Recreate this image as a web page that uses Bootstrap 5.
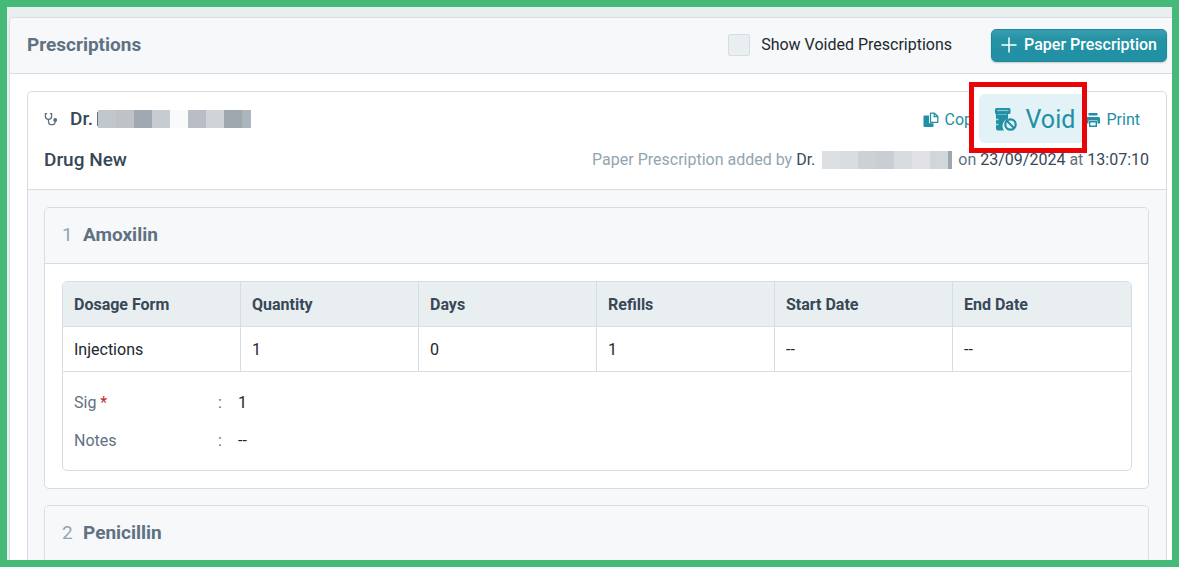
<!DOCTYPE html>
<html lang="en">
<head>
<meta charset="utf-8">
<meta name="viewport" content="width=device-width, initial-scale=1">
<title>Prescriptions</title>
<link href="https://cdn.jsdelivr.net/npm/bootstrap@5.3.0/dist/css/bootstrap.min.css" rel="stylesheet">
<style>
:root { --line: #d6dde5; --soft: #f6f8fa; --head: #e9eef1; --slate: #5f7182; --ink: #374857; --teal: #2190a4; }
body { font-family: Roboto, "Liberation Sans", sans-serif; font-size: 16px; line-height: 24px; color: #22282e; }
.frame { height: 100vh; border: 7px solid #44b978; background: var(--head); padding: 10px 0 0 2px; overflow: hidden; }
.panel { border: 1px solid var(--line); border-radius: 5px; background: #fff; }
.panel-page { border-right: 0; border-radius: 5px 0 0 0; }
.panel-head { background: var(--soft); border-bottom: 1px solid var(--line); border-radius: 4px 4px 0 0; height: 56px; padding: 0 17px 1px; }
.panel-page > .panel-head { padding-right: 5px; }
.panel-page > .panel-body { padding: 17px 5px 17px 17px; }
.panel-title { font-size: 19px; line-height: 24px; font-weight: 700; color: var(--slate); margin: 0; }
.panel-title .num { font-weight: 400; color: #93a5b1; display: inline-block; width: 21px; }
.rx-head { padding: 15px 17px 17px 16px; border-bottom: 1px solid var(--line); }
.rx-top { height: 24px; margin-bottom: 17px; }
.rx-body { padding: 17px 17px 17px 16px; background: var(--soft); display: grid; gap: 16px; border-radius: 0 0 5px 5px; }
.rx-title { font-size: 19px; line-height: 24px; font-weight: 500; color: var(--ink); margin: 0; }
.toggle { gap: 11px; margin-right: 39px; }
.form-check-input.voided { width: 22px; height: 22px; margin: 0; border: 1px solid var(--line); border-radius: 2px; background-color: var(--head); }
.btn-teal { background: linear-gradient(#3a9fb0, #2592a5 30%, #2190a4); border: 1px solid #1c8a9d; border-radius: 5px; color: #fff; font-weight: 500; height: 33px; padding: 0 9px 0 8px; gap: 6px; box-shadow: 0 1px 2px #0003; }
.btn-teal:hover { background: #1c8294; color: #fff; }
.actions { margin-right: 9px; padding-top: 2px; }
.act { color: var(--teal); text-decoration: none; gap: 6px; }
.slot { width: 104px; }
.callout { position: absolute; left: -12px; top: -26px; width: 118px; height: 71px; border: 5px solid #e90407; background: #fff; padding: 7px 0 5px 5px; z-index: 2; }
.btn-void { background: #e3f2f6; color: var(--teal); border: 0; border-radius: 6px 0 0 6px; height: 49px; font-size: 25px; padding: 2px 0 0 15px; }
.redact { height: 18px; display: flex; }
.redact i { flex: 0 0 18px; }
.redact .edge { flex-basis: 1px; height: 14px; margin-top: 2px; }
.meta { color: var(--slate); }
.meta .redact { margin: 0 2px 0 3px; }
.meta .by { color: #93a5b1; }
.meta b { font-weight: 400; color: var(--ink); }
.dose { padding: 17px 16px 17px 17px; }
.dose-box { border: 1px solid var(--line); border-radius: 5px; overflow: hidden; }
.dose-table { width: 100%; table-layout: fixed; border-collapse: separate; border-spacing: 0; }
.dose-table th, .dose-table td { height: 45px; padding: 1px 11px 0; border-bottom: 1px solid var(--line); border-right: 1px solid var(--line); }
.dose-table th:last-child, .dose-table td:last-child { border-right: 0; }
.dose-table th { background: var(--head); color: var(--ink); font-weight: 700; }
.notes { padding: 19px 11px 17px; margin: 0; display: grid; grid-template-columns: 144px 20px 1fr; row-gap: 14px; }
.notes dt, .notes dd { margin: 0; font-weight: 400; }
.notes dt, .notes .colon { color: var(--slate); }
.notes .star { color: #c22b2b; }
</style>
</head>
<body>
<main class="frame">
  <section class="panel panel-page">
    <header class="panel-head d-flex align-items-center">
      <h1 class="panel-title me-auto">Prescriptions</h1>
      <div class="toggle d-flex align-items-center">
        <input class="form-check-input voided" type="checkbox" id="voided">
        <label for="voided">Show Voided Prescriptions</label>
      </div>
      <button type="button" class="btn btn-teal d-flex align-items-center">
        <svg width="18" height="18" viewBox="0 0 18 18" fill="none" stroke="currentColor" stroke-width="1.5" stroke-linecap="round"><path d="M9 2v14M2 9h14"/></svg>
        <span>Paper Prescription</span>
      </button>
    </header>
    <div class="panel-body">
      <article class="panel">
        <header class="rx-head">
          <div class="rx-top d-flex align-items-center">
            <svg class="me-2" width="14" height="14" viewBox="0 0 14 14" fill="none" stroke="#5f7182" stroke-width="1.3" stroke-linecap="round"><path d="M2.600 1.600H1.400v2.600a3.100 3.100 0 0 0 6.200 0V1.600H6.400M4.500 7.400v2a3.300 3.300 0 0 0 6.600 0V9.200"/><circle cx="11.200" cy="8" r="1.300" fill="#5f7182"/></svg>
            <h2 class="rx-title ms-1 me-1">Dr.</h2>
            <span class="redact"><i class="edge" style="background:#5f7182"></i><i style="background:#c2c7cb"></i><i style="background:#bdc3c7"></i><i style="background:#a0a9b1"></i><i style="background:#c7ccd0"></i><i style="background:#fafafa"></i><i style="background:#b8bdc6"></i><i style="background:#d0d4d7"></i><i style="background:#9fa7af"></i><i style="background:#adb5bc;flex-basis:9px"></i></span>
            <nav class="actions d-flex align-items-center ms-auto" aria-label="Prescription actions">
              <a href="#" class="act d-flex align-items-center">
                <svg width="16" height="16" viewBox="0 0 16 16"><path fill="#2190a4" d="M1.500 3.500H6v7.700h4.500V14q0 1-1 1h-8q-1 0-1-1V4.500q0-1 1-1z"/><path d="M7.500 1.200h4l3.300 3.300v5.800H7.500z" fill="#fff" stroke="#2190a4" stroke-width="1.300" stroke-linejoin="round"/><path d="M11.200 1.200v3.500h3.600" fill="none" stroke="#2190a4" stroke-width="1.300"/></svg>
                <span>Copy</span>
              </a>
              <div class="slot position-relative align-self-stretch">
                <div class="callout">
                  <button type="button" class="btn-void w-100 d-flex align-items-center">
                    <svg class="me-2" width="24" height="24" viewBox="0 0 24 24"><path fill="#2190a4" d="M2.500 0H15q1.500 0 1.500 1.500v3Q16.500 6 15 6h-1v5A7.300 7.300 0 0 0 10 22.500H4q-2 0-2-2V6Q1 6 1 4.500v-3Q1 0 2.500 0z"/><path d="M3 2.500h11.500" stroke="#8fc9d4" stroke-width="1.200"/><path d="M3.500 6.500H13" stroke="#6fb8c5" stroke-width="1"/><path d="M2 11.500h2.500M2 16.500h2.500" stroke="#a9d6de" stroke-width="1.300"/><circle cx="16.500" cy="16.500" r="5.200" fill="#e3f2f6" stroke="#2190a4" stroke-width="2.200"/><path d="M13 13l7 7" stroke="#2190a4" stroke-width="2"/></svg>
                    <span>Void</span>
                  </button>
                </div>
              </div>
              <a href="#" class="act d-flex align-items-center">
                <svg width="16" height="16" viewBox="0 0 16 16"><path fill="#2190a4" d="M3.500 1h9v2.500h-9zM2.500 5h11Q15 5 15 6.500v5h-2.500v-3h-9v3H1v-5Q1 5 2.500 5z"/><path d="M4.700 9.700h6.600v4.600H4.700z" fill="#fff" stroke="#2190a4" stroke-width="1.400"/></svg>
                <span>Print</span>
              </a>
            </nav>
          </div>
          <div class="d-flex align-items-center">
            <h3 class="rx-title me-auto">Drug New</h3>
            <div class="meta d-flex align-items-center gap-1">
              <span><span class="by">Paper Prescription added by</span> <b>Dr.</b></span>
              <span class="redact"><i style="background:#dce0e3"></i><i style="background:#d9dde0"></i><i style="background:#cdd1d5"></i><i style="background:#cacdd3"></i><i style="background:#d8dcdf"></i><i style="background:#e0e2e6"></i><i style="background:#d1d6d9"></i><i style="background:#9da7af;flex-basis:4px"></i></span>
              <span>on <b>23/09/2024</b> at <b>13:07:10</b></span>
            </div>
          </div>
        </header>
        <div class="rx-body">
          <section class="panel">
            <header class="panel-head d-flex align-items-center"><h4 class="panel-title"><span class="num">1</span>Amoxilin</h4></header>
            <div class="dose">
              <div class="dose-box">
                <table class="dose-table">
                  <thead><tr><th>Dosage Form</th><th>Quantity</th><th>Days</th><th>Refills</th><th>Start Date</th><th>End Date</th></tr></thead>
                  <tbody><tr><td>Injections</td><td>1</td><td>0</td><td>1</td><td>--</td><td>--</td></tr></tbody>
                </table>
                <dl class="notes">
                  <dt>Sig<span class="star"> *</span></dt><dd class="colon">:</dd><dd>1</dd>
                  <dt>Notes</dt><dd class="colon">:</dd><dd>--</dd>
                </dl>
              </div>
            </div>
          </section>
          <section class="panel">
            <header class="panel-head d-flex align-items-center"><h4 class="panel-title"><span class="num">2</span>Penicillin</h4></header>
          </section>
        </div>
      </article>
    </div>
  </section>
</main>
<script src="https://cdn.jsdelivr.net/npm/bootstrap@5.3.0/dist/js/bootstrap.bundle.min.js"></script>
</body>
</html>
